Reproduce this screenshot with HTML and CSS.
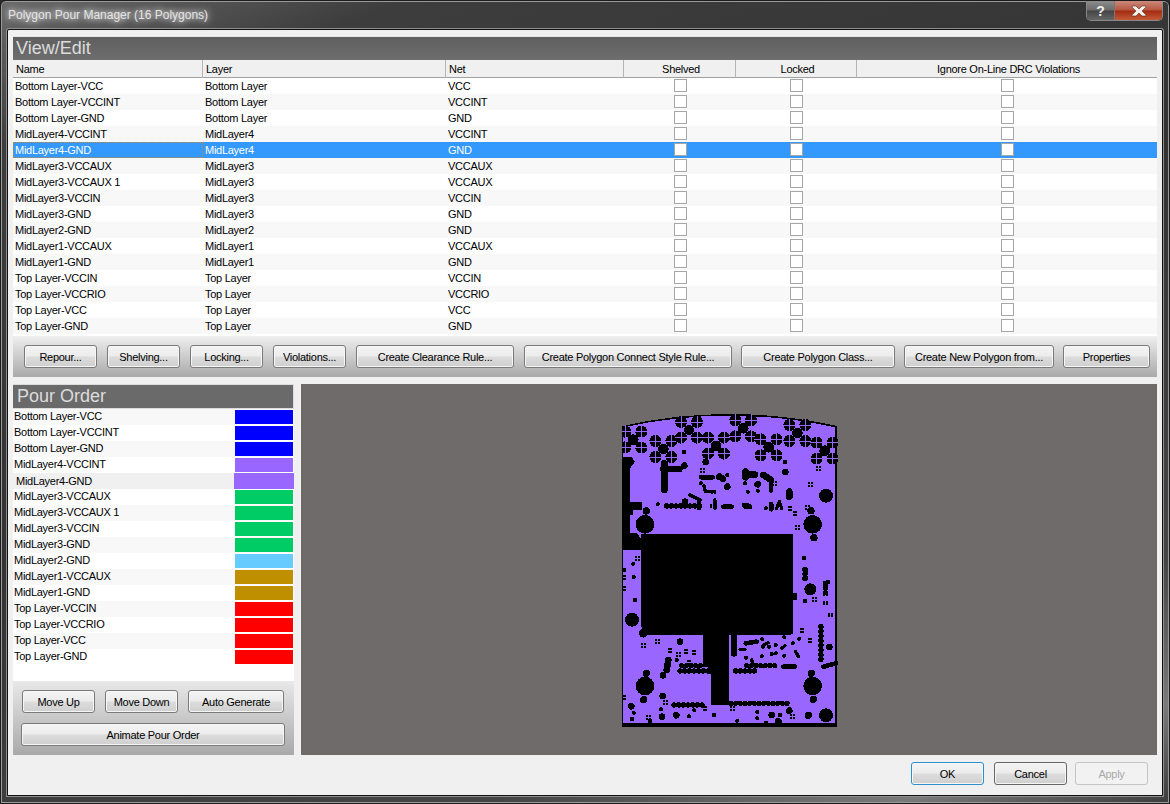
FILE: index.html
```html
<!DOCTYPE html>
<html lang="en">
<head>
<meta charset="utf-8">
<title>Polygon Pour Manager (16 Polygons)</title>
<link rel="stylesheet" href="styles.css">
</head>
<body>
<div class="window">
  <div class="titlebar">
    <span class="title">Polygon Pour Manager (16 Polygons)</span>
    <div class="caption">
      <span class="cap cap-help">?</span>
      <span class="cap cap-close"><svg class="cap-x" viewBox="0 0 16 12" width="16" height="12"><path d="M1 1h4l3 3 3-3h4v1l-4 4 4 4v1h-4l-3-3-3 3H1v-1l4-4-4-4z"/></svg></span>
    </div>
  </div>
  <div class="client">
    <section class="view">
      <h2 class="heading">View/Edit</h2>
      <div class="cols thead">
        <div class="th">Name</div><div class="th">Layer</div><div class="th">Net</div>
        <div class="th mid">Shelved</div><div class="th mid">Locked</div><div class="th mid">Ignore On-Line DRC Violations</div>
      </div>
      <div class="tbody">
        <div class="cols row"><div class="td">Bottom Layer-VCC</div><div class="td">Bottom Layer</div><div class="td">VCC</div><div class="cc"><i class="chk"></i></div><div class="cc"><i class="chk"></i></div><div class="cc"><i class="chk"></i></div></div>
        <div class="cols row"><div class="td">Bottom Layer-VCCINT</div><div class="td">Bottom Layer</div><div class="td">VCCINT</div><div class="cc"><i class="chk"></i></div><div class="cc"><i class="chk"></i></div><div class="cc"><i class="chk"></i></div></div>
        <div class="cols row"><div class="td">Bottom Layer-GND</div><div class="td">Bottom Layer</div><div class="td">GND</div><div class="cc"><i class="chk"></i></div><div class="cc"><i class="chk"></i></div><div class="cc"><i class="chk"></i></div></div>
        <div class="cols row"><div class="td">MidLayer4-VCCINT</div><div class="td">MidLayer4</div><div class="td">VCCINT</div><div class="cc"><i class="chk"></i></div><div class="cc"><i class="chk"></i></div><div class="cc"><i class="chk"></i></div></div>
        <div class="cols row sel"><div class="td focus">MidLayer4-GND</div><div class="td">MidLayer4</div><div class="td">GND</div><div class="cc"><i class="chk"></i></div><div class="cc"><i class="chk"></i></div><div class="cc"><i class="chk"></i></div></div>
        <div class="cols row"><div class="td">MidLayer3-VCCAUX</div><div class="td">MidLayer3</div><div class="td">VCCAUX</div><div class="cc"><i class="chk"></i></div><div class="cc"><i class="chk"></i></div><div class="cc"><i class="chk"></i></div></div>
        <div class="cols row"><div class="td">MidLayer3-VCCAUX 1</div><div class="td">MidLayer3</div><div class="td">VCCAUX</div><div class="cc"><i class="chk"></i></div><div class="cc"><i class="chk"></i></div><div class="cc"><i class="chk"></i></div></div>
        <div class="cols row"><div class="td">MidLayer3-VCCIN</div><div class="td">MidLayer3</div><div class="td">VCCIN</div><div class="cc"><i class="chk"></i></div><div class="cc"><i class="chk"></i></div><div class="cc"><i class="chk"></i></div></div>
        <div class="cols row"><div class="td">MidLayer3-GND</div><div class="td">MidLayer3</div><div class="td">GND</div><div class="cc"><i class="chk"></i></div><div class="cc"><i class="chk"></i></div><div class="cc"><i class="chk"></i></div></div>
        <div class="cols row"><div class="td">MidLayer2-GND</div><div class="td">MidLayer2</div><div class="td">GND</div><div class="cc"><i class="chk"></i></div><div class="cc"><i class="chk"></i></div><div class="cc"><i class="chk"></i></div></div>
        <div class="cols row"><div class="td">MidLayer1-VCCAUX</div><div class="td">MidLayer1</div><div class="td">VCCAUX</div><div class="cc"><i class="chk"></i></div><div class="cc"><i class="chk"></i></div><div class="cc"><i class="chk"></i></div></div>
        <div class="cols row"><div class="td">MidLayer1-GND</div><div class="td">MidLayer1</div><div class="td">GND</div><div class="cc"><i class="chk"></i></div><div class="cc"><i class="chk"></i></div><div class="cc"><i class="chk"></i></div></div>
        <div class="cols row"><div class="td">Top Layer-VCCIN</div><div class="td">Top Layer</div><div class="td">VCCIN</div><div class="cc"><i class="chk"></i></div><div class="cc"><i class="chk"></i></div><div class="cc"><i class="chk"></i></div></div>
        <div class="cols row"><div class="td">Top Layer-VCCRIO</div><div class="td">Top Layer</div><div class="td">VCCRIO</div><div class="cc"><i class="chk"></i></div><div class="cc"><i class="chk"></i></div><div class="cc"><i class="chk"></i></div></div>
        <div class="cols row"><div class="td">Top Layer-VCC</div><div class="td">Top Layer</div><div class="td">VCC</div><div class="cc"><i class="chk"></i></div><div class="cc"><i class="chk"></i></div><div class="cc"><i class="chk"></i></div></div>
        <div class="cols row"><div class="td">Top Layer-GND</div><div class="td">Top Layer</div><div class="td">GND</div><div class="cc"><i class="chk"></i></div><div class="cc"><i class="chk"></i></div><div class="cc"><i class="chk"></i></div></div>
      </div>
      <div class="band band-view">
        <button class="btn w73">Repour...</button>
        <button class="btn w73">Shelving...</button>
        <button class="btn w73">Locking...</button>
        <button class="btn w73">Violations...</button>
        <button class="btn w158">Create Clearance Rule...</button>
        <button class="btn w208">Create Polygon Connect Style Rule...</button>
        <button class="btn w154 tight">Create Polygon Class...</button>
        <button class="btn w150 tight">Create New Polygon from...</button>
        <button class="btn w87 tight">Properties</button>
      </div>
    </section>
    <div class="lower">
      <aside class="pour">
        <h2 class="heading heading-pour">Pour Order</h2>
        <div class="pour-list">
          <div class="pour-row"><span>Bottom Layer-VCC</span><i class="swatch blue"></i></div>
          <div class="pour-row"><span>Bottom Layer-VCCINT</span><i class="swatch blue"></i></div>
          <div class="pour-row"><span>Bottom Layer-GND</span><i class="swatch blue"></i></div>
          <div class="pour-row"><span>MidLayer4-VCCINT</span><i class="swatch purple"></i></div>
          <div class="pour-row pour-sel"><span>MidLayer4-GND</span><i class="swatch purple"></i></div>
          <div class="pour-row"><span>MidLayer3-VCCAUX</span><i class="swatch green"></i></div>
          <div class="pour-row"><span>MidLayer3-VCCAUX 1</span><i class="swatch green"></i></div>
          <div class="pour-row"><span>MidLayer3-VCCIN</span><i class="swatch green"></i></div>
          <div class="pour-row"><span>MidLayer3-GND</span><i class="swatch green"></i></div>
          <div class="pour-row"><span>MidLayer2-GND</span><i class="swatch sky"></i></div>
          <div class="pour-row"><span>MidLayer1-VCCAUX</span><i class="swatch gold"></i></div>
          <div class="pour-row"><span>MidLayer1-GND</span><i class="swatch gold"></i></div>
          <div class="pour-row"><span>Top Layer-VCCIN</span><i class="swatch red"></i></div>
          <div class="pour-row"><span>Top Layer-VCCRIO</span><i class="swatch red"></i></div>
          <div class="pour-row"><span>Top Layer-VCC</span><i class="swatch red"></i></div>
          <div class="pour-row"><span>Top Layer-GND</span><i class="swatch red"></i></div>
        </div>
        <div class="band band-pour">
          <div class="band-line">
            <button class="btn w73">Move Up</button>
            <button class="btn w73">Move Down</button>
            <button class="btn w96">Auto Generate</button>
          </div>
          <button class="btn wide">Animate Pour Order</button>
        </div>
      </aside>
      <div class="preview">
        <svg class="pcb" viewBox="66 39 648 942" width="216" height="314">
          <defs>
            <g id="t"><circle r="18"/><path class="cross" d="M-19 0H19M0-19V19"/></g>
            <g id="s"><path class="mini" d="M-7-7h6v6h-6zM1-7h6v6h-6zM-7 1h6v6h-6zM1 1h6v6h-6z"/></g>
          </defs>
          <path class="ink" d="M66 78Q388 6 711 78V980H66Z"/>
          <path class="fill" d="M70 82Q388 12 706 82V970H70Z"/>
          <path class="ink" d="M66 170H88L105 185 90 205V305H125V330H100V345H90V400H110L128 420V450H66ZM124 402H579V580H592V600H579V700L570 705H387V915H333V822H325V800H309V705H130L124 680Z"/>
          <g class="ink">
            <use href="#t" x="243" y="66"/><use href="#t" x="291" y="66"/><use href="#t" x="406" y="61"/><use href="#t" x="453" y="61"/><use href="#t" x="568" y="75"/><use href="#t" x="616" y="75"/>
            <use href="#t" x="76" y="95"/><use href="#t" x="124" y="95"/><use href="#t" x="76" y="142"/><use href="#t" x="124" y="143"/><use href="#t" x="166" y="123"/><use href="#t" x="214" y="123"/><use href="#t" x="243" y="113"/><use href="#t" x="291" y="113"/><use href="#t" x="324" y="113"/><use href="#t" x="372" y="113"/><use href="#t" x="406" y="109"/><use href="#t" x="453" y="109"/><use href="#t" x="482" y="118"/><use href="#t" x="530" y="118"/><use href="#t" x="568" y="123"/><use href="#t" x="616" y="123"/><use href="#t" x="650" y="128"/><use href="#t" x="698" y="128"/><use href="#t" x="166" y="171"/><use href="#t" x="214" y="171"/><use href="#t" x="324" y="161"/><use href="#t" x="372" y="161"/><use href="#t" x="482" y="166"/><use href="#t" x="530" y="166"/><use href="#t" x="650" y="176"/><use href="#t" x="698" y="176"/>
            <circle cx="267" cy="90" r="15"/><circle cx="430" cy="85" r="16"/><circle cx="592" cy="99" r="16"/><circle cx="100" cy="119" r="16"/><circle cx="348" cy="138" r="16"/><circle cx="506" cy="142" r="16"/><circle cx="190" cy="147" r="16"/><circle cx="674" cy="152" r="16"/>
            <circle cx="135" cy="373" r="28"/><circle cx="638" cy="373" r="28"/><circle cx="96" cy="659" r="21"/><circle cx="631" cy="568" r="18"/><circle cx="678" cy="287" r="21"/><circle cx="135" cy="858" r="28"/><circle cx="638" cy="858" r="28"/><circle cx="678" cy="946" r="21"/><circle cx="625" cy="946" r="11"/><circle cx="535" cy="965" r="11"/>
            <circle cx="139" cy="333" r="11"/><circle cx="642" cy="413" r="11"/><circle cx="633" cy="332" r="11"/><circle cx="139" cy="820" r="11"/><circle cx="634" cy="820" r="11"/><circle cx="131" cy="899" r="11"/><circle cx="640" cy="898" r="11"/><circle cx="130" cy="700" r="13"/>
            <use href="#s" x="252" y="156"/><use href="#s" x="308" y="211"/><use href="#s" x="655" y="205"/><use href="#s" x="632" y="254"/><use href="#s" x="524" y="250"/><use href="#s" x="592" y="383"/><use href="#s" x="612" y="474"/><use href="#s" x="616" y="516"/><use href="#s" x="616" y="534"/><use href="#s" x="684" y="546"/><use href="#s" x="676" y="562"/><use href="#s" x="676" y="580"/><use href="#s" x="643" y="598"/><use href="#s" x="676" y="609"/><use href="#s" x="105" y="600"/><use href="#s" x="113" y="475"/><use href="#s" x="72" y="510"/><use href="#s" x="72" y="532"/><use href="#s" x="72" y="565"/><use href="#s" x="173" y="724"/><use href="#s" x="130" y="736"/><use href="#s" x="606" y="692"/><use href="#s" x="630" y="722"/><use href="#s" x="258" y="754"/><use href="#s" x="236" y="764"/><use href="#s" x="282" y="758"/><use href="#s" x="267" y="788"/><use href="#s" x="72" y="893"/><use href="#s" x="96" y="957"/><use href="#s" x="145" y="952"/><use href="#s" x="197" y="907"/><use href="#s" x="578" y="950"/><use href="#s" x="540" y="945"/><use href="#s" x="315" y="925"/><use href="#s" x="397" y="925"/><use href="#s" x="338" y="318"/><use href="#s" x="623" y="323"/><use href="#s" x="585" y="340"/><use href="#s" x="570" y="326"/><use href="#s" x="340" y="276"/><use href="#s" x="692" y="645"/><use href="#s" x="210" y="752"/>
          </g>
          <g class="wires">
            <path class="w16" d="M193 190V270M190 207H238M437 215V232M437 222L465 224M490 225L513 240M402 706V760M205 780L200 810M568 275V290M66 180H90"/>
            <path class="w12" d="M303 232H338M297 310V325M370 320H395M432 316L450 320M514 312V328M550 800H585M513 240V272M670 800L708 790M437 730L470 725"/>
            <path class="w8" d="M312 258L316 275H338M270 285L300 300M345 300V325M530 325L538 305 545 325M587 755L595 770M420 749H435M455 780L462 797M555 737L545 745M490 735L505 728"/>
            <path class="beads" d="M200 318H304M245 797H310M440 797H530M240 813H330M407 813H470M222 915H310M393 910H565M663 680V790M615 508V545M676 550V590"/>
            <path class="d12" d="M317 186h0M556 216h0M358 230h0M368 236h0M473 253h0M188 888h0M94 919h0M186 950h0M229 946h0M515 945h0M568 932h0M255 305h0M688 741h0M189 826h0M240 725h0M253 197h0M440 318h0M382 260h0"/>
            <path class="d8" d="M173 313h0M555 186h0M382 225h0M435 250h0M443 275h0M473 272h0M302 250h0M497 325h0M100 491h0M101 531h0M615 603h0M230 780h0M489 740h0M507 740h0M527 735h0M578 730h0M598 716h0M553 712h0M487 718h0M485 769h0M515 762h0M527 760h0M553 767h0M438 773h0M101 938h0M183 928h0M267 949h0M283 931h0M342 945h0M412 962h0M472 936h0M472 955h0M498 968h0M150 963h0"/>
          </g>
        </svg>
      </div>
    </div>
    <div class="footer">
      <button class="btn w73 default">OK</button>
      <button class="btn w73 cancel">Cancel</button>
      <button class="btn w73" disabled>Apply</button>
    </div>
  </div>
</div>
</body>
</html>
```
FILE: styles.css
```css
* { box-sizing: border-box; }
html, body { margin: 0; height: 100%; overflow: hidden; }
body { background: #2a2a2a; font: 11px/16px "Liberation Sans", "Noto Sans", sans-serif; letter-spacing: -.27px; color: #000; }

.window { height: 804px; display: flex; flex-direction: column; padding: 0 6px 7px; border: 1px solid #1c1c1c; border-radius: 6px 6px 0 0;
  background: linear-gradient(160deg, #6a6a6a 0, #3d3d3d 12%, #333 45%, #454545 80%, #7a7a7a 92%, #3c3c3c 100%);
  box-shadow: inset 0 0 0 1px #9a9a9a; }
.titlebar { height: 28px; flex: none; display: flex; justify-content: space-between; }
.title { padding: 6px 0 0 1px; color: #e4e4e4; font-size: 12px; line-height: 17px; letter-spacing: 0; text-shadow: 0 0 6px #fff, 0 0 10px #bbb; }
.caption { display: flex; height: 20px; border: 1px solid #888; border-top: 0; border-radius: 0 0 5px 5px; overflow: hidden; }
.cap { display: flex; align-items: center; justify-content: center; font-weight: bold; color: #eee; }
.cap-help { width: 28px; font-size: 14px; background: linear-gradient(#8d8d8d, #6b6b6b 48%, #444 52%, #666); border-right: 1px solid #777; }
.cap-close { width: 47px; background: linear-gradient(#c98a7c, #b8553f 48%, #a32a10 52%, #c45a38); }
.cap-x { fill: #f4f0ee; stroke: #6a2a1a; stroke-width: .6; }

.client { flex: 1; min-height: 0; display: flex; flex-direction: column; padding: 6px 5px 0; background: #f0f0f0; border: 1px solid #111; border-radius: 2px 2px 0 0; box-shadow: 0 0 0 1px #8e8e8e; }

.heading { margin: 0; height: 24px; padding-left: 3px; font: 400 18px/23px "Liberation Sans", "Noto Sans", sans-serif; letter-spacing: 0; color: #dcdcdc; background: linear-gradient(#5f5f5f, #6e6e6e); border-top: 1px solid #e6e6e6; }
.view { flex: none; height: 341px; display: flex; flex-direction: column; }

.cols { display: grid; grid-template-columns: 190px 243px 178px 112px 121px 300px; }
.thead { height: 18px; background: #f0f0f0; border-bottom: 1px solid #a0a0a0; }
.th { padding: 0 0 0 3px; line-height: 18px; border-right: 1px solid #b5b5b5; }
.th.mid { text-align: center; }
.th:last-child { border-right: 0; }
.tbody { background: #fff; padding-bottom: 2px; }
.row { height: 16px; background: #fff; }
.row:nth-child(even) { background: #f8f8f8; }
.td { padding-left: 2px; line-height: 16px; white-space: nowrap; }
.cc { display: flex; align-items: flex-start; justify-content: center; padding-top: 1px; }
.chk { display: block; width: 13px; height: 13px; background: #fff; border: 1px solid #a6a6a6; }
.row.sel { background: #3399ff; color: #fff; }
.focus { outline: 1px dotted #c8873a; outline-offset: -1px; }

.band { background: linear-gradient(#efefef, #a9a9a9); }
.band-view { height: 41px; flex: none; display: flex; align-items: flex-start; gap: 10px; padding: 9px 0 0 11px; }
.btn { height: 23px; padding: 0; font: inherit; letter-spacing: inherit; color: #000; border: 1px solid #7a7a7a; border-radius: 3px; background: linear-gradient(#f4f4f4, #ececec 48%, #dcdcdc 52%, #cfcfcf); box-shadow: inset 0 0 0 1px #f6f6f6; white-space: nowrap; }
.w73 { width: 73px; } .w96 { width: 96px; } .w158 { width: 158px; } .w208 { width: 208px; } .w154 { width: 154px; } .w150 { width: 150px; } .w87 { width: 87px; }
.tight { margin-left: -1px; }
.wide { width: 264px; }
.default { border-color: #2d8fd0; margin-right: 2px; }
.cancel { border-color: #666; }
.btn:disabled { color: #a8a8a8; border-color: #c4c4c4; background: #f2f2f2; box-shadow: none; }

.lower { flex: none; height: 371px; margin-top: 7px; display: grid; grid-template-columns: 281px 856px; gap: 7px; }
.pour { display: flex; flex-direction: column; }
.heading-pour { height: 25px; padding-left: 4px; background: #6a6a6a; border: 1px solid #dcdcdc; border-width: 1px 1px 1px 0; }
.pour-list { flex: 1; background: #fff; }
.pour-row { height: 16px; display: flex; justify-content: space-between; align-items: center; padding-left: 1px; line-height: 16px; }
.pour-row span { margin-top: -2px; }
.pour-row:nth-child(odd) { background: #f8f8f8; }
.swatch { display: block; width: 58px; height: 14px; margin-right: 1px; }
.pour-row.pour-sel { background: #f0f0f0; padding-left: 3px; }
.pour-row.pour-sel span { margin-top: 0; }
.pour-sel .swatch { width: 60px; height: 16px; margin-right: 0; }
.blue { background: #0000ff; } .purple { background: #9966ff; } .green { background: #00cc66; } .sky { background: #66ccff; } .gold { background: #bf8f00; } .red { background: #ff0000; }
.band-pour { height: 74px; flex: none; display: flex; flex-direction: column; padding: 9px 8px 0; gap: 10px; background: linear-gradient(#e8e8e8, #a9a9a9); }
.band-line { display: flex; gap: 10px; padding-left: 1px; }

.preview { background: #6f6b6b; display: flex; align-items: center; justify-content: center; padding-left: 2px; }
.pcb { display: block; shape-rendering: crispEdges; }
.ink { fill: #000; }
.fill { fill: #9966ff; }
.cross { stroke: #9966ff; stroke-width: 3; fill: none; }
.mini { fill: #000; }
.wires path { fill: none; stroke: #000; stroke-linecap: round; stroke-linejoin: round; }
.wires .w16 { stroke-width: 20; }
.wires .w12 { stroke-width: 14; }
.wires .w8 { stroke-width: 10; }
.wires .beads { stroke-width: 16; stroke-dasharray: 0 14; }
.wires .d12 { stroke-width: 20; }
.wires .d8 { stroke-width: 13; }

.footer { flex: 1; display: flex; align-items: flex-start; justify-content: flex-end; padding: 7px 9px 0 0; gap: 8px; }
```
